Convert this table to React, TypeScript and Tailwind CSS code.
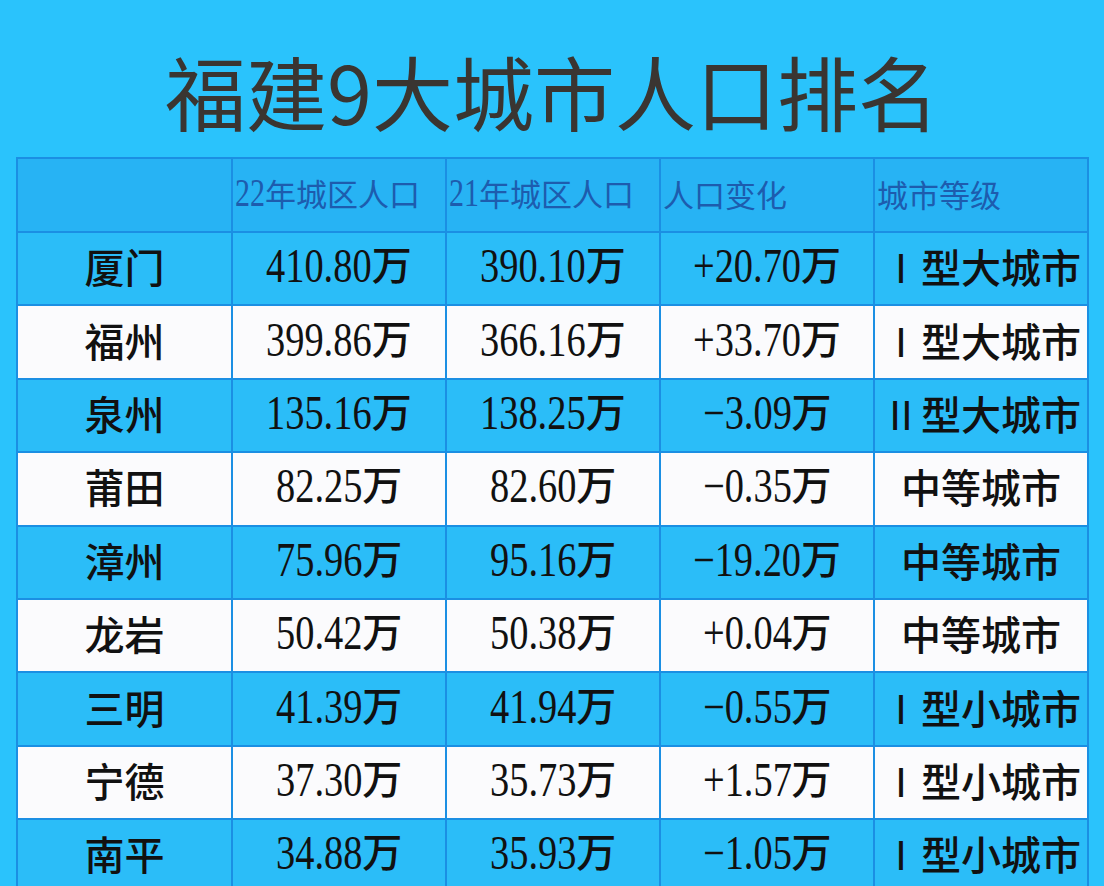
import React from 'react';

type Row = {
  city: string;
  y22: string;
  y21: string;
  change: string;
  grade: string;
};

const rows: Row[] = [
  { city: '厦门', y22: '410.80', y21: '390.10', change: '+20.70', grade: 'Ⅰ型大城市' },
  { city: '福州', y22: '399.86', y21: '366.16', change: '+33.70', grade: 'Ⅰ型大城市' },
  { city: '泉州', y22: '135.16', y21: '138.25', change: '−3.09', grade: 'Ⅱ型大城市' },
  { city: '莆田', y22: '82.25', y21: '82.60', change: '−0.35', grade: '中等城市' },
  { city: '漳州', y22: '75.96', y21: '95.16', change: '−19.20', grade: '中等城市' },
  { city: '龙岩', y22: '50.42', y21: '50.38', change: '+0.04', grade: '中等城市' },
  { city: '三明', y22: '41.39', y21: '41.94', change: '−0.55', grade: 'Ⅰ型小城市' },
  { city: '宁德', y22: '37.30', y21: '35.73', change: '+1.57', grade: 'Ⅰ型小城市' },
  { city: '南平', y22: '34.88', y21: '35.93', change: '−1.05', grade: 'Ⅰ型小城市' },
];

// advance widths of Liberation Serif glyphs, in em
const GLYPH_W: Record<string, number> = { '.': 0.25, '+': 0.564, '−': 0.564 };

// condensed serif digits: the glyphs get squeezed, the box width is worked out from the text
const Digits = ({ text, size, sx, className }: { text: string; size: number; sx: number; className: string }) => {
  const w = [...text].reduce((a, c) => a + (GLYPH_W[c] ?? 0.5), 0) * size * sx;
  return (
    <span className="inline-block whitespace-nowrap" style={{ width: w }}>
      <span className={`inline-block origin-left font-['Liberation_Serif',serif] ${className}`}>{text}</span>
    </span>
  );
};

const Value = ({ n }: { n: string }) => (
  <span className="flex items-baseline leading-none">
    <Digits text={n} size={48} sx={0.8} className="text-[48px] scale-x-[0.8]" />
    <span className="relative -top-[2px] text-[40px] font-medium">万</span>
  </span>
);

const Grade = ({ g }: { g: string }) => {
  const roman = /^[ⅠⅡ]/.test(g);
  return (
    <span>
      {roman && <span className="font-normal">{g[0]}</span>}
      {roman ? g.slice(1) : g}
    </span>
  );
};

const HeadCell = ({ label }: { label: string }) => {
  const m = label.match(/^(\d+)(.*)$/);
  return (
    <div className="flex items-center bg-[#27b3f4] pl-[2px] pb-[4px] text-[#1d5cae]">
      <span className="flex items-baseline leading-none">
        {m && <Digits text={m[1]} size={40} sx={0.75} className="text-[40px] scale-x-[0.75]" />}
        <span className="text-[31px]">{m ? m[2] : label}</span>
      </span>
    </div>
  );
};

export default function App() {
  return (
    <div className="h-[886px] w-full overflow-hidden bg-[#2ac3fc] font-['Noto_Sans_CJK_SC',sans-serif]">
      <h1 className="pt-[49px] text-center text-[81px] font-normal leading-none text-[#3a3531]">
        福建9大城市人口排名
      </h1>

      <div className="mx-[16px] mt-[27px] grid w-[1073px] grid-cols-[213px_212px_212px_212px_212px] grid-rows-[72px] auto-rows-[71.4px] gap-[2px] bg-[#1b8fe3] p-[2px]">
        <div className="bg-[#27b3f4]" />
        <HeadCell label="22年城区人口" />
        <HeadCell label="21年城区人口" />
        <HeadCell label="人口变化" />
        <HeadCell label="城市等级" />

        {rows.map((r, i) => {
          const bg = i % 2 === 0 ? 'bg-[#2bbdf8]' : 'bg-[#fbfbfd]';
          return (
            <React.Fragment key={r.city}>
              <div className={`${bg} flex items-center justify-center pb-[5px] text-[40px] font-medium leading-none text-[#111]`}>
                {r.city}
              </div>
              <div className={`${bg} flex items-center justify-center pb-[5px] text-[#111]`}>
                <Value n={r.y22} />
              </div>
              <div className={`${bg} flex items-center justify-center pb-[5px] text-[#111]`}>
                <Value n={r.y21} />
              </div>
              <div className={`${bg} flex items-center justify-center pb-[5px] text-[#111]`}>
                <Value n={r.change} />
              </div>
              <div className={`${bg} flex items-center justify-center pb-[5px] text-[40px] font-medium leading-none text-[#111]`}>
                <Grade g={r.grade} />
              </div>
            </React.Fragment>
          );
        })}
      </div>
    </div>
  );
}
